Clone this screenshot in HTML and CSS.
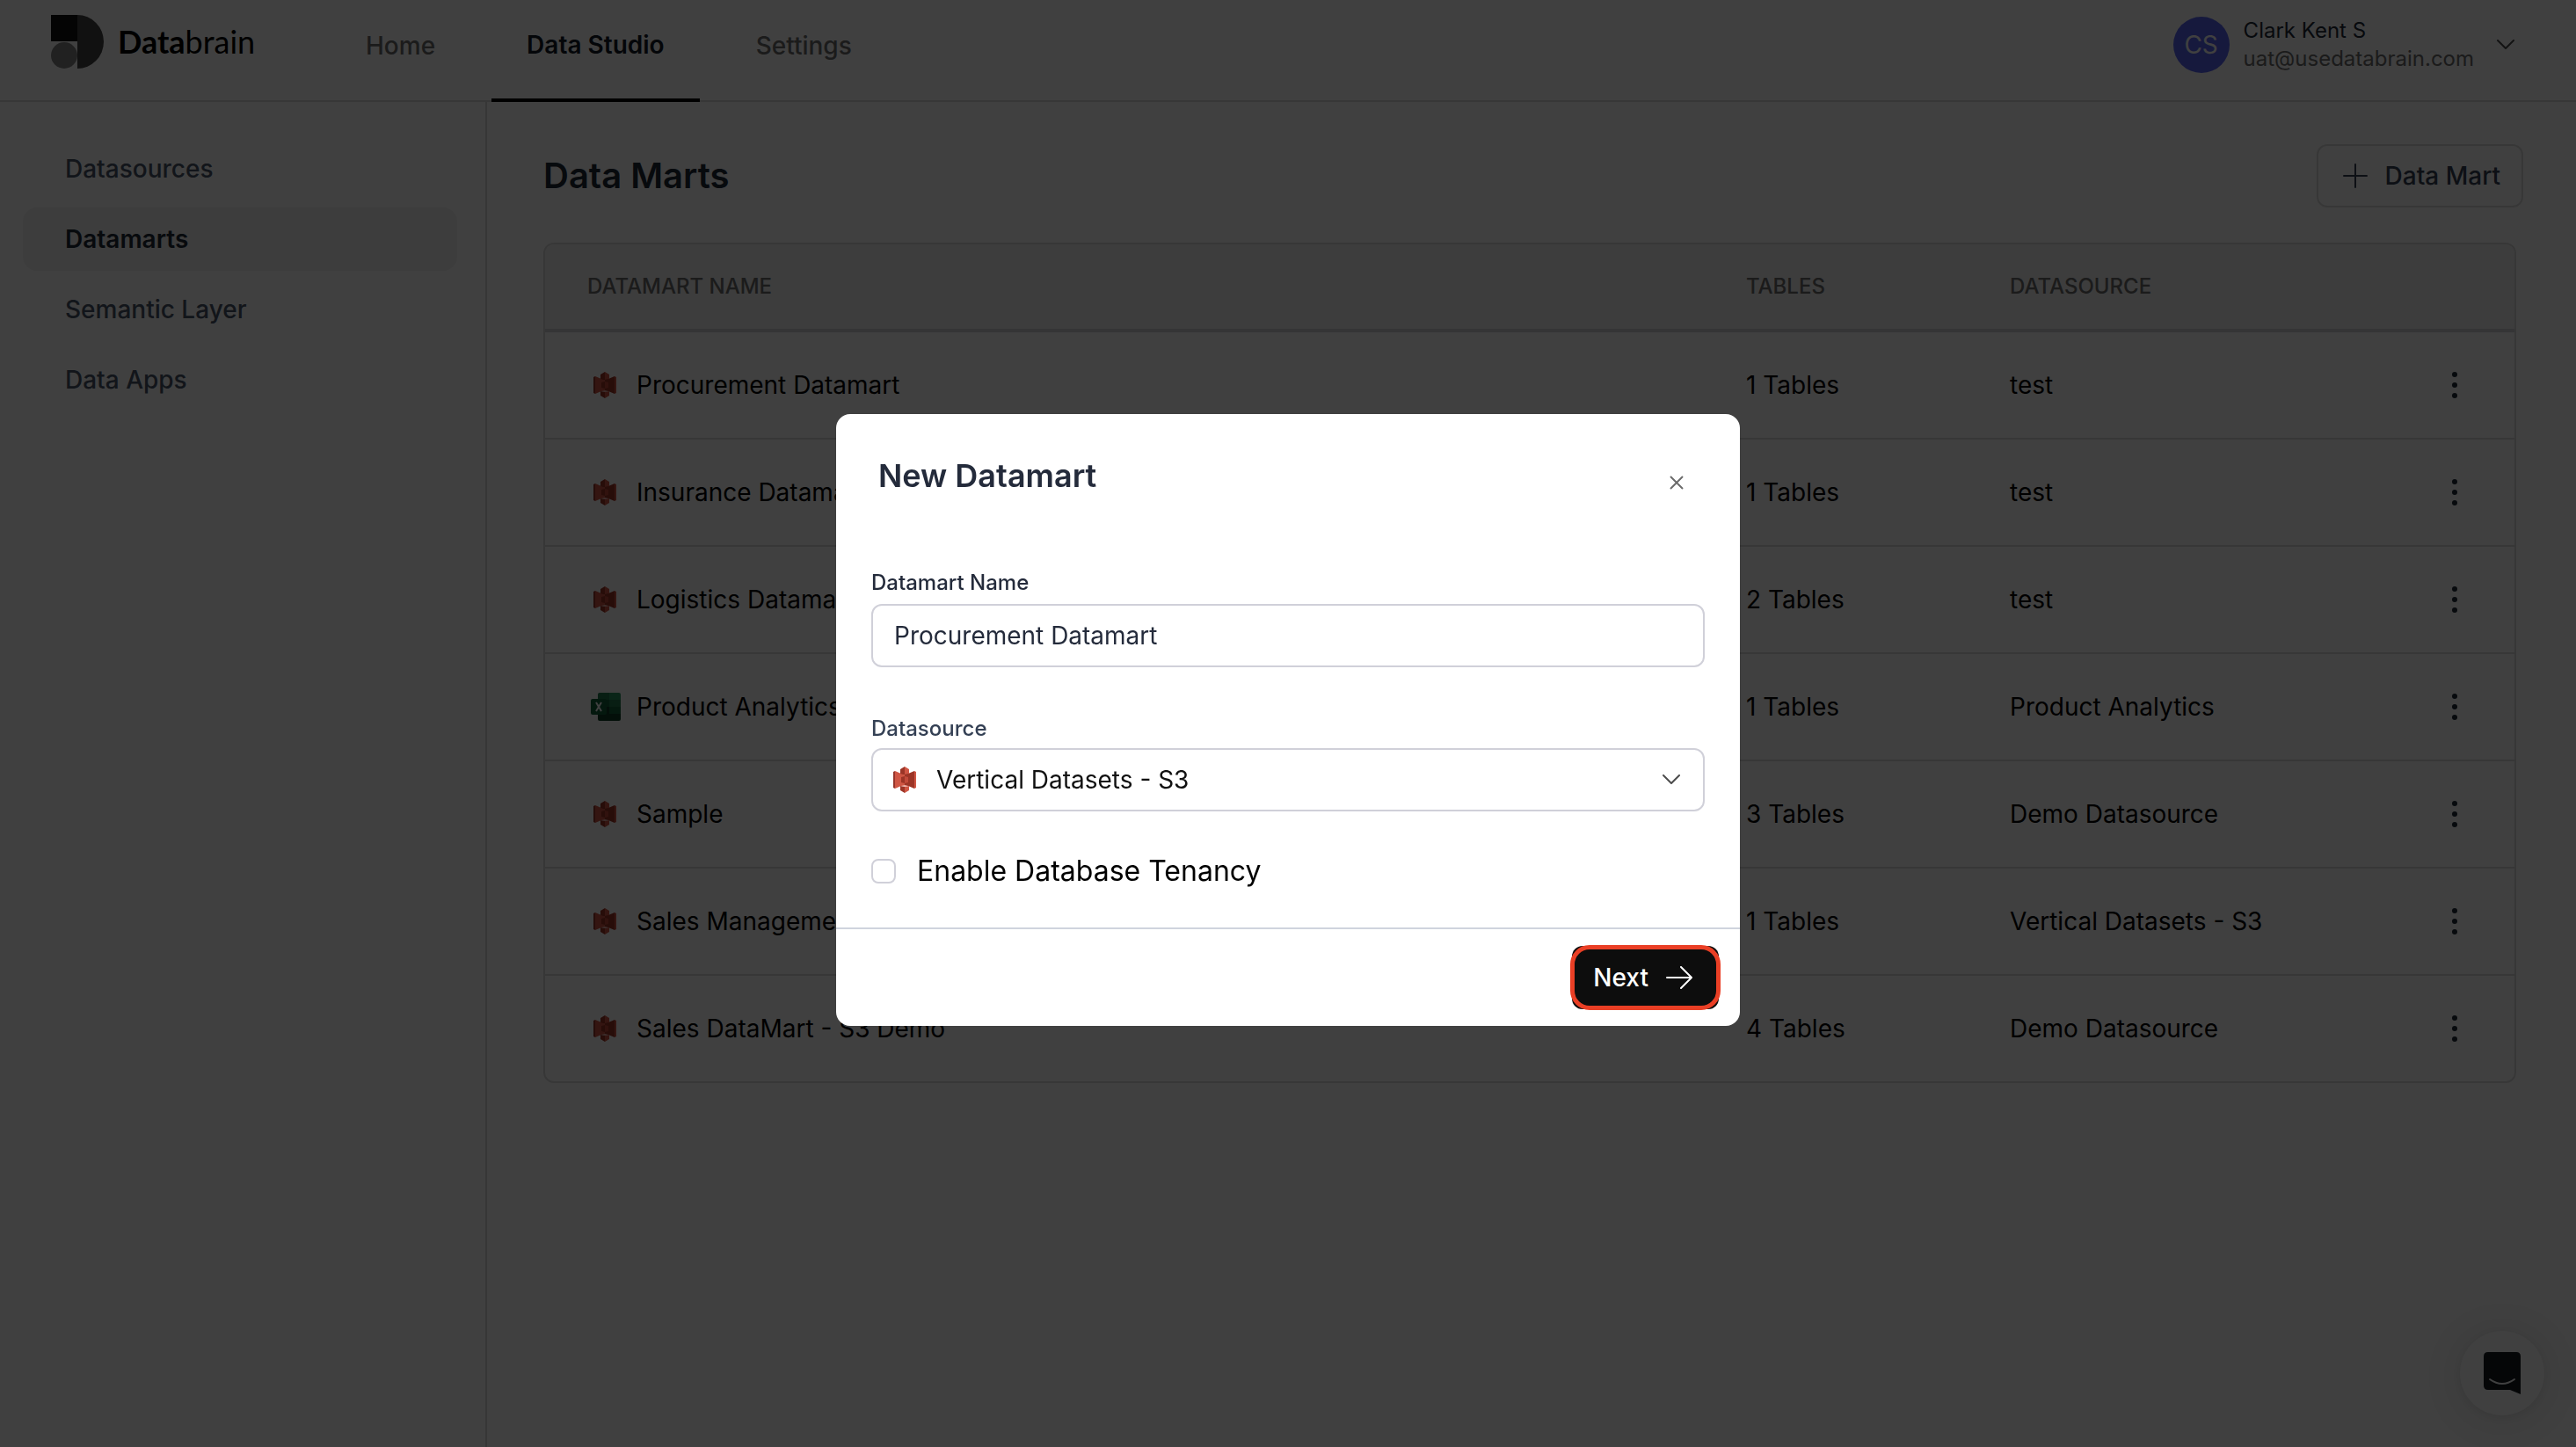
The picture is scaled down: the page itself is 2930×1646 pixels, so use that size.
FILE: index.html
```html
<!DOCTYPE html>
<html lang="en">
<head>
    <meta charset="UTF-8">
    <meta name="viewport" content="width=device-width, initial-scale=1.0">
    <title>Data Marts - Databrain</title>
    <link rel="stylesheet" href="styles.css">
</head>
<body>
    <!-- Shared icons -->
    <svg class="sprite" aria-hidden="true">
        <symbol id="icon-s3" viewBox="0 0 26 30">
            <path fill="#cf5644" d="M2 5l7 3h4v14H9l-7 3z"/>
            <path fill="#9c3527" d="M24 5l-7 3h-4v14h4l7 3z"/>
            <path fill="#96352a" d="M2 5 0 6v18l2 1z"/>
            <path fill="#cf5644" d="m24 5 2 1v18l-2 1z"/>
            <path fill="#9c3527" d="M9 12l4-1v8l-4-1z"/>
            <path fill="#c24a3a" d="m17 12-4-1v8l4-1z"/>
            <path fill="#6b1f16" d="m9 8 4-1 4 1-4 1z"/>
            <path fill="#f0b5ad" d="m9 22 4-1 4 1-4 1z"/>
            <path fill="#9c3527" d="M8 3l5-3v9l-5-1zM8 22l5 1v7l-5-3z"/>
            <path fill="#cf5644" d="m18 3-5-3v9l5-1zM18 22l-5 1v7l5-3z"/>
        </symbol>
        <symbol id="icon-excel" viewBox="0 0 34 32">
            <path fill="#21794e" d="M10 0h11v9H8V2q0-2 2-2z"/>
            <path fill="#2b9360" d="M21 0h11q2 0 2 2v7H21z"/>
            <path fill="#135f38" d="M8 8h13v9H8z"/>
            <path fill="#21794e" d="M21 8h13v9H21z"/>
            <path fill="#0e3f25" d="M8 16h26v14q0 2-2 2H10q-2 0-2-2z"/>
            <path fill="#135f38" d="M21 16h13v8H21z"/>
            <rect y="7" width="18" height="18" rx="2" fill="#10613a"/>
            <path fill="none" stroke="#fff" stroke-width="2" d="m6 11 6 10M12 11 6 21"/>
        </symbol>
        <symbol id="icon-chevron" viewBox="0 0 20 12">
            <path fill="none" stroke="currentColor" stroke-width="2" stroke-linecap="round" stroke-linejoin="round" d="m1 1 9 9 9-9"/>
        </symbol>
        <symbol id="icon-dots" viewBox="0 0 8 32">
            <circle cx="4" cy="4" r="3"/>
            <circle cx="4" cy="16" r="3"/>
            <circle cx="4" cy="28" r="3"/>
        </symbol>
    </svg>

    <header class="header">
        <a class="logo" href="#">
            <svg class="logo-mark" viewBox="0 0 60 61" aria-hidden="true">
                <path fill="#444" d="M30 0a30 30.500 0 0 1 0 61z"/>
                <path fill="#111" d="M0 0h30v30H0z"/>
                <circle cx="15" cy="46" r="15" fill="#858585"/>
            </svg>
            <span class="logo-text"><b>Data</b>brain</span>
        </a>
        <nav class="tabs">
            <a class="tab" href="#">Home</a>
            <a class="tab active" href="#">Data Studio</a>
            <a class="tab" href="#">Settings</a>
        </nav>
        <button class="account" type="button">
            <span class="avatar">CS</span>
            <span class="account-info">
                <span class="account-name">Clark Kent S</span>
                <span class="account-email">uat@usedatabrain.com</span>
            </span>
            <svg class="chevron" aria-hidden="true"><use href="#icon-chevron"/></svg>
        </button>
    </header>

    <div class="layout">
        <nav class="sidebar">
            <a class="side-link" href="#">Datasources</a>
            <a class="side-link active" href="#">Datamarts</a>
            <a class="side-link" href="#">Semantic Layer</a>
            <a class="side-link" href="#">Data Apps</a>
        </nav>

        <main class="main">
            <div class="page-head">
                <h1>Data Marts</h1>
                <button class="add-btn" type="button">
                    <svg class="plus" viewBox="0 0 28 28" aria-hidden="true"><path fill="none" stroke="currentColor" stroke-width="2" stroke-linecap="round" d="M14 1v26M1 14h26"/></svg>
                    Data Mart
                </button>
            </div>

            <div class="table-card">
                <table>
                    <thead>
                        <tr>
                            <th class="col-name">DATAMART NAME</th>
                            <th class="col-tables">TABLES</th>
                            <th>DATASOURCE</th>
                            <th class="col-menu"></th>
                        </tr>
                    </thead>
                    <tbody>
                        <tr>
                            <td><span class="name"><svg class="s3" aria-hidden="true"><use href="#icon-s3"/></svg>Procurement Datamart</span></td>
                            <td>1 Tables</td>
                            <td>test</td>
                            <td><button class="menu-btn" type="button" aria-label="More"><svg><use href="#icon-dots"/></svg></button></td>
                        </tr>
                        <tr>
                            <td><span class="name"><svg class="s3" aria-hidden="true"><use href="#icon-s3"/></svg>Insurance Datamart</span></td>
                            <td>1 Tables</td>
                            <td>test</td>
                            <td><button class="menu-btn" type="button" aria-label="More"><svg><use href="#icon-dots"/></svg></button></td>
                        </tr>
                        <tr>
                            <td><span class="name"><svg class="s3" aria-hidden="true"><use href="#icon-s3"/></svg>Logistics Datamart</span></td>
                            <td>2 Tables</td>
                            <td>test</td>
                            <td><button class="menu-btn" type="button" aria-label="More"><svg><use href="#icon-dots"/></svg></button></td>
                        </tr>
                        <tr>
                            <td><span class="name"><svg class="excel" aria-hidden="true"><use href="#icon-excel"/></svg>Product Analytics</span></td>
                            <td>1 Tables</td>
                            <td>Product Analytics</td>
                            <td><button class="menu-btn" type="button" aria-label="More"><svg><use href="#icon-dots"/></svg></button></td>
                        </tr>
                        <tr>
                            <td><span class="name"><svg class="s3" aria-hidden="true"><use href="#icon-s3"/></svg>Sample</span></td>
                            <td>3 Tables</td>
                            <td>Demo Datasource</td>
                            <td><button class="menu-btn" type="button" aria-label="More"><svg><use href="#icon-dots"/></svg></button></td>
                        </tr>
                        <tr>
                            <td><span class="name"><svg class="s3" aria-hidden="true"><use href="#icon-s3"/></svg>Sales Management</span></td>
                            <td>1 Tables</td>
                            <td>Vertical Datasets - S3</td>
                            <td><button class="menu-btn" type="button" aria-label="More"><svg><use href="#icon-dots"/></svg></button></td>
                        </tr>
                        <tr>
                            <td><span class="name"><svg class="s3" aria-hidden="true"><use href="#icon-s3"/></svg>Sales DataMart - S3 Demo</span></td>
                            <td>4 Tables</td>
                            <td>Demo Datasource</td>
                            <td><button class="menu-btn" type="button" aria-label="More"><svg><use href="#icon-dots"/></svg></button></td>
                        </tr>
                    </tbody>
                </table>
            </div>
        </main>
    </div>

    <button class="chat" type="button" aria-label="Open chat">
        <svg class="chat-icon" viewBox="0 0 42 48" aria-hidden="true">
            <path fill="#14181f" d="M5 0h32q5 0 5 5v43l-12-5H5q-5 0-5-5V5q0-5 5-5z"/>
            <path fill="none" stroke="#fff" stroke-width="2" stroke-linecap="round" d="M7 31q14 10 28 0"/>
        </svg>
    </button>

    <div class="overlay">
        <form class="modal" role="dialog" aria-labelledby="modal-title">
            <div class="modal-head">
                <h2 id="modal-title">New Datamart</h2>
                <button class="close" type="button" aria-label="Close">
                    <svg viewBox="0 0 16 16" aria-hidden="true"><path fill="none" stroke="currentColor" stroke-width="2" d="m1 1 14 14M15 1 1 15"/></svg>
                </button>
            </div>

            <div class="modal-body">
                <label class="label label-dark" for="datamart-name">Datamart Name</label>
                <input class="field" type="text" id="datamart-name" value="Procurement Datamart">

                <label class="label label-source" for="datasource">Datasource</label>
                <div class="field select-field">
                    <svg class="s3" aria-hidden="true"><use href="#icon-s3"/></svg>
                    <select id="datasource">
                        <option>Vertical Datasets - S3</option>
                        <option>Demo Datasource</option>
                        <option>Product Analytics</option>
                        <option>test</option>
                    </select>
                    <svg class="chevron" aria-hidden="true"><use href="#icon-chevron"/></svg>
                </div>

                <div class="check-row">
                    <input type="checkbox" id="tenancy">
                    <label for="tenancy">Enable Database Tenancy</label>
                </div>
            </div>

            <div class="modal-foot">
                <button class="next-btn" type="button">
                    Next
                    <svg viewBox="0 0 30 26" aria-hidden="true"><path fill="none" stroke="currentColor" stroke-width="2" stroke-linecap="round" stroke-linejoin="round" d="M1 13h28M17 1l12 12-12 12"/></svg>
                </button>
            </div>
        </form>
    </div>
</body>
</html>
```
FILE: styles.css
```css
* {
    margin: 0;
    padding: 0;
    box-sizing: border-box;
}

body {
    display: flex;
    flex-direction: column;
    min-height: 100vh;
    background-color: #fff;
    font-family: Inter, "Liberation Sans", sans-serif;
    font-size: 28px;
    line-height: 40px;
    color: #000;
}

a {
    color: inherit;
    text-decoration: none;
}

button,
input,
select {
    font: inherit;
    color: inherit;
    background: none;
    border: none;
}

button {
    cursor: pointer;
}

svg {
    display: block;
    flex-shrink: 0;
}

.sprite {
    position: absolute;
    width: 0;
    height: 0;
}

/* Header */
.header {
    display: flex;
    height: 116px;
    padding: 0 70px 0 58px;
    border-bottom: 2px solid #dcdcdc;
}

.logo {
    display: flex;
    align-items: center;
    gap: 16px;
    width: 318px;
    padding-bottom: 20px;
}

.logo-mark {
    width: 60px;
    height: 61px;
}

.logo-text {
    font-family: Lato, sans-serif;
    font-size: 36px;
}

.tabs {
    display: flex;
    gap: 24px;
}

.tab {
    display: flex;
    align-items: center;
    padding: 0 40px 8px;
    margin-bottom: -2px;
    border-bottom: 4px solid transparent;
    color: #6b6b6b;
    font-weight: 500;
}

.tab.active {
    padding-bottom: 10px;
    color: #111827;
    font-weight: 600;
    border-bottom-color: #000;
}

.account {
    display: flex;
    align-items: center;
    margin-left: auto;
    padding-bottom: 12px;
    text-align: left;
}

.avatar {
    width: 64px;
    height: 64px;
    margin-right: 16px;
    border-radius: 50%;
    background-color: #5865f2;
    color: #fff;
    line-height: 64px;
    text-align: center;
}

.account-info {
    display: flex;
    flex-direction: column;
    margin-right: 26px;
    font-size: 24px;
    line-height: 32px;
}

.account-name {
    color: #1f2937;
}

.account-email {
    color: #6b6b6b;
}

.chevron {
    width: 20px;
    height: 12px;
    color: #4d4d4d;
}

/* Sidebar */
.layout {
    display: flex;
    flex: 1;
}

.sidebar {
    display: flex;
    flex-direction: column;
    gap: 8px;
    width: 554px;
    flex-shrink: 0;
    padding: 40px 32px 40px 26px;
    border-right: 2px solid #dcdcdc;
}

.side-link {
    padding: 16px 48px;
    border-radius: 16px;
    color: #475467;
    font-weight: 500;
}

.side-link.active {
    background-color: #f2f2f2;
    color: #1f2937;
    font-weight: 600;
}

/* Data marts list */
.main {
    flex: 1;
    padding: 48px 60px 48px 64px;
}

.page-head {
    display: flex;
    justify-content: space-between;
    align-items: center;
    margin-bottom: 40px;
}

h1 {
    font-size: 40px;
    font-weight: 600;
    line-height: 48px;
    color: #1f2937;
}

.add-btn {
    display: flex;
    align-items: center;
    gap: 20px;
    height: 72px;
    padding: 0 24px 0 28px;
    border: 2px solid #dcdcdc;
    border-radius: 12px;
    color: #344054;
    font-weight: 500;
}

.plus {
    width: 28px;
    height: 28px;
}

.table-card {
    margin-right: 8px;
    border: 2px solid #dcdcdc;
    border-radius: 12px;
    overflow: hidden;
}

table {
    width: 100%;
    border-collapse: separate;
    border-spacing: 0;
    table-layout: fixed;
}

th {
    height: 100px;
    padding: 0 22px;
    background-color: #f2f2f2;
    border-bottom: 4px solid #d4d4d8;
    color: #6b6b6b;
    font-size: 24px;
    font-weight: 500;
    text-align: left;
}

td {
    height: 122px;
    padding: 0 22px;
    border-bottom: 2px solid #dcdcdc;
}

tr:last-child td {
    height: 120px;
    border-bottom: none;
}

th:first-child,
td:first-child {
    padding-left: 48px;
}

.col-name {
    width: 60%;
}

.col-tables {
    width: 300px;
}

.col-menu {
    width: 136px;
}

.name {
    display: flex;
    align-items: center;
    gap: 16px;
}

.s3 {
    width: 26px;
    height: 30px;
    margin: 0 7px;
}

.excel {
    width: 34px;
    height: 32px;
    margin: 0 2px 0 4px;
}

.menu-btn {
    display: block;
    margin: 0 auto;
}

.menu-btn svg {
    width: 8px;
    height: 32px;
    fill: #1f2937;
}

/* Chat launcher */
.chat {
    position: fixed;
    right: 36px;
    bottom: 36px;
    display: flex;
    align-items: center;
    justify-content: center;
    width: 96px;
    height: 96px;
    border-radius: 50%;
    background-color: #fff;
    box-shadow: 0 2px 12px rgba(0, 0, 0, 0.08), 0 4px 64px rgba(0, 0, 0, 0.14);
}

.chat-icon {
    width: 42px;
    height: 48px;
}

/* Modal */
.overlay {
    position: fixed;
    inset: 0;
    display: flex;
    align-items: center;
    justify-content: center;
    padding-bottom: 8px;
    background-color: rgba(0, 0, 0, 0.75);
}

.modal {
    width: 1028px;
    max-width: 100%;
    border-radius: 16px;
    background-color: #fff;
}

.modal-head {
    display: flex;
    justify-content: space-between;
    align-items: flex-end;
    padding: 44px 64px 0 48px;
}

h2 {
    font-size: 36px;
    font-weight: 600;
    line-height: 52px;
    color: #242b3b;
}

.close {
    padding: 0 0 10px;
    color: #6b6b6b;
}

.close svg {
    width: 16px;
    height: 16px;
}

.modal-body {
    padding: 80px 40px 44px;
}

.label {
    display: block;
    margin-bottom: 8px;
    color: #344054;
    font-size: 24px;
    font-weight: 500;
    line-height: 32px;
}

.label-dark {
    color: #242b3b;
}

.label-source {
    margin-top: 54px;
    margin-bottom: 6px;
}

.field {
    display: flex;
    align-items: center;
    width: 100%;
    height: 72px;
    padding: 0 24px;
    border: 2px solid #d0d0d9;
    border-radius: 12px;
    color: #242b3b;
}

.select-field {
    padding: 0 26px 0 16px;
    color: #111;
}

.select-field select {
    flex: 1;
    height: 68px;
    padding-left: 16px;
    appearance: none;
}

.check-row {
    display: flex;
    align-items: center;
    gap: 24px;
    margin-top: 48px;
    font-size: 32px;
}

.check-row input {
    width: 28px;
    height: 28px;
    border: 2px solid #d0d0d9;
    border-radius: 8px;
    appearance: none;
}

.modal-foot {
    display: flex;
    justify-content: flex-end;
    padding: 19px 24px;
    border-top: 2px solid #cfd4de;
}

.next-btn {
    position: relative;
    display: flex;
    align-items: center;
    gap: 20px;
    height: 72px;
    padding: 0 30px 0 24px;
    border-radius: 12px;
    background-color: #0d0d0d;
    color: #fff;
    font-weight: 500;
}

.next-btn svg {
    width: 30px;
    height: 26px;
}

/* red ring drawn over the button edge */
.next-btn::after {
    content: "";
    position: absolute;
    inset: -1px -2px;
    border: 5px solid #ea3f25;
    border-radius: 22px;
}
```
